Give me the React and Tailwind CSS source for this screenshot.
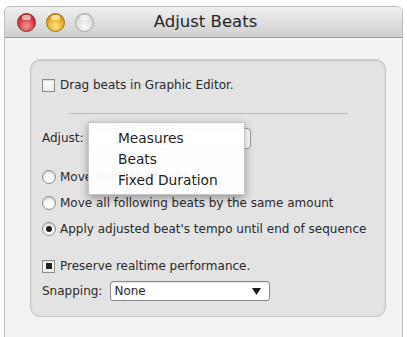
import React from "react";

const font = { fontFamily: '"DejaVu Sans", "Liberation Sans", sans-serif' };

function Light({ color }) {
  const styles = {
    red: "bg-[radial-gradient(circle_at_50%_70%,#f49a9a_0%,#d0383d_55%,#8e1f22_100%)] border-[#8a3030]",
    yellow: "bg-[radial-gradient(circle_at_50%_70%,#fbe58a_0%,#e7ad1f_55%,#a0700c_100%)] border-[#9a7420]",
    gray: "bg-[radial-gradient(circle_at_50%_70%,#fafafa_0%,#dcdcdc_60%,#bdbdbd_100%)] border-[#a8a8a8]",
  };
  return (
    <div className={`relative w-[19px] h-[19px] rounded-full border ${styles[color]}`}>
      <div className="absolute left-[4px] top-[1px] w-[9px] h-[5px] rounded-full bg-white/60" />
    </div>
  );
}

function Check({ checked }) {
  return (
    <div className="w-[13px] h-[13px] shrink-0 border border-[#8c8c8c] bg-gradient-to-b from-white to-[#ececec] shadow-[inset_0_1px_1px_rgba(0,0,0,0.15)] flex items-center justify-center">
      {checked && <div className="w-[6px] h-[6px] bg-[#222]" />}
    </div>
  );
}

function Radio({ checked }) {
  return (
    <div className="w-[14px] h-[14px] shrink-0 rounded-full border border-[#8c8c8c] bg-gradient-to-b from-[#f4f4f4] to-white shadow-[inset_0_1px_2px_rgba(0,0,0,0.2)] flex items-center justify-center">
      {checked && <div className="w-[6px] h-[6px] rounded-full bg-[#1e1e1e]" />}
    </div>
  );
}

export default function App() {
  return (
    <div className="relative w-[407px] h-[337px] bg-white overflow-hidden text-[#2a2a2a]" style={font}>
      <div className="ml-[4px] mt-[6px] w-[399px] h-[345px] border border-[#bdbdbd] rounded-t-[6px] bg-[#f3f3f3] overflow-hidden">
        {/* title bar */}
        <div className="relative h-[31px] bg-gradient-to-b from-[#efefef] to-[#cfcfcf] border-b border-[#9c9c9c] flex items-center pl-[12px] gap-[10px]">
          <Light color="red" />
          <Light color="yellow" />
          <Light color="gray" />
          <div className="absolute inset-0 flex items-center justify-center pl-[4px] text-[16.5px] text-[#262626]">
            Adjust Beats
          </div>
        </div>
        {/* body */}
        <div className="pt-[21px] pl-[25px]">
          <div className="w-[356px] h-[258px] rounded-[10px] border border-[#c4c4c4] bg-[#e3e3e3] shadow-[inset_0_1px_2px_rgba(0,0,0,0.12)] pl-[11px] pt-[15px] text-[12px] whitespace-nowrap">
            <div className="h-[20px] flex items-center gap-[5px]">
              <Check />
              <span>Drag beats in Graphic Editor.</span>
            </div>
            <div className="mt-[18px] ml-[27px] w-[279px] h-[2px] border-t border-[#bdbdbd] border-b-white" />
            <div className="mt-[12px] h-[22px] flex items-center gap-[4px]">
              <span>Adjust:</span>
              <div className="w-[163px] h-[21px] rounded-[4px] border border-[#9a9a9a] bg-white" />
            </div>
            <div className="mt-[15px]">
              <div className="h-[26px] flex items-center gap-[4px]">
                <Radio />
                <span>Move following beats</span>
              </div>
              <div className="h-[26px] flex items-center gap-[4px]">
                <Radio />
                <span>Move all following beats by the same amount</span>
              </div>
              <div className="h-[26px] flex items-center gap-[4px]">
                <Radio checked />
                <span>Apply adjusted beat's tempo until end of sequence</span>
              </div>
            </div>
            <div className="mt-[14px] h-[20px] flex items-center gap-[5px]">
              <Check checked />
              <span>Preserve realtime performance.</span>
            </div>
            <div className="mt-[5px] h-[20px] flex items-center gap-[8px]">
              <span>Snapping:</span>
              <div className="w-[160px] h-[20px] rounded-[3px] border border-[#8a8a8a] bg-white shadow-[inset_0_1px_1px_rgba(0,0,0,0.1)] flex items-center justify-between pl-[3px] pr-[8px]">
                <span>None</span>
                <svg width="9" height="7" viewBox="0 0 9 7"><path d="M0 0H9L4.5 7Z" fill="#1a1a1a" /></svg>
              </div>
            </div>
          </div>
        </div>
      </div>
      {/* dropdown menu */}
      <div className="absolute left-[88px] top-[122px] w-[157px] h-[73px] bg-white/95 border border-[#c8c8c8] shadow-[0_3px_8px_rgba(0,0,0,0.35)] pl-[29px] pt-[5px] text-[13.75px] text-[#1f1f1f]">
        <div className="h-[21px] flex items-center">Measures</div>
        <div className="h-[21px] flex items-center">Beats</div>
        <div className="h-[21px] flex items-center">Fixed Duration</div>
      </div>
    </div>
  );
}
